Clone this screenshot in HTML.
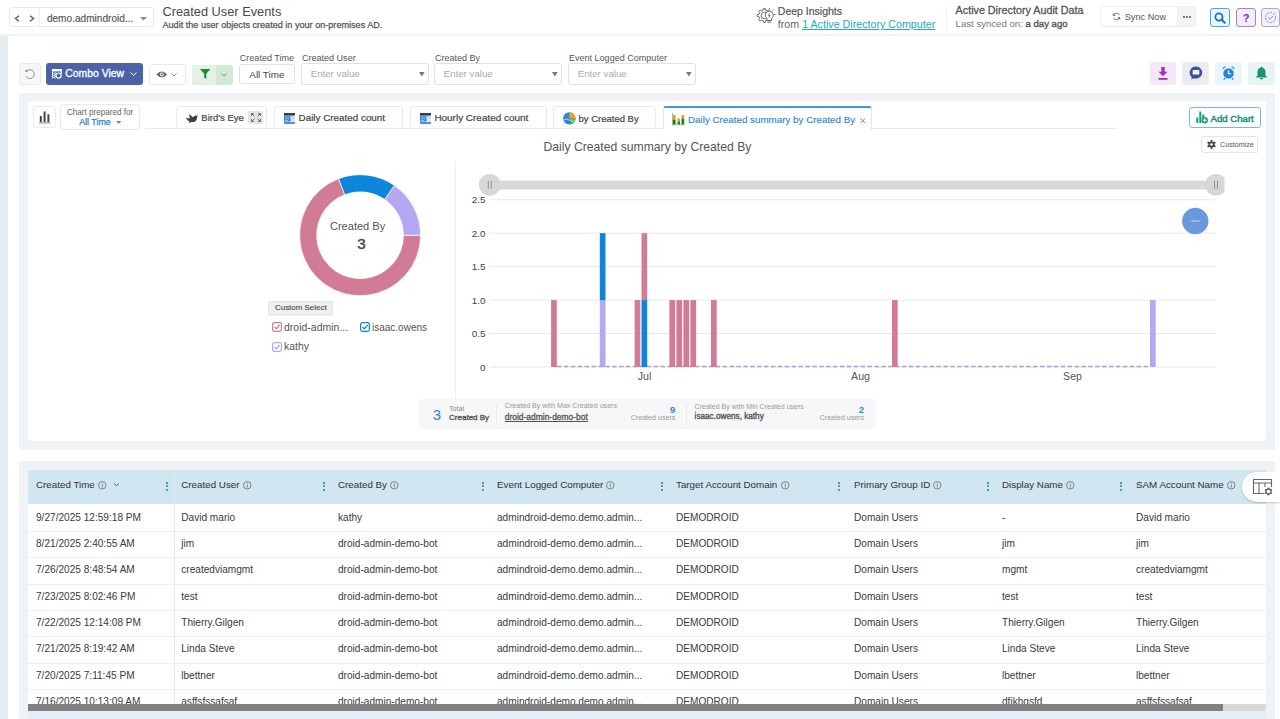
<!DOCTYPE html>
<html><head><meta charset="utf-8">
<style>
*{box-sizing:border-box;margin:0;padding:0}
html,body{width:1280px;height:719px;overflow:hidden;background:#fff;font-family:"Liberation Sans",sans-serif;color:#333}
.a{position:absolute}
.nw{white-space:nowrap;line-height:normal}
svg{overflow:visible}
</style></head><body>

<div class="a" style="left:0px;top:0px;width:1280px;height:35px;background:#fff"></div>
<div class="a" style="left:0px;top:34px;width:1280px;height:2px;background:#f1f3f5"></div>
<div class="a" style="left:0px;top:36px;width:8px;height:683px;background:#e5ebef"></div>
<div class="a" style="left:9px;top:7px;width:145px;height:20px;border:1px solid #e9ebed;border-radius:3px;background:#fff"></div>
<div class="a" style="left:39px;top:8px;width:1px;height:18px;background:#eef0f2"></div>
<svg class="a" style="left:14px;top:15px" width="6" height="7" viewBox="0 0 6 7"><path d="M5 0.7 L1.3 3.5 L5 6.3" fill="none" stroke="#555" stroke-width="1.2"/></svg>
<svg class="a" style="left:29px;top:15px" width="6" height="7" viewBox="0 0 6 7"><path d="M1 0.7 L4.7 3.5 L1 6.3" fill="none" stroke="#555" stroke-width="1.2"/></svg>
<div class="a nw" style="left:46.90px;top:12.99px;font-size:10.1px;color:#555;-webkit-text-stroke:0.15px #555;">demo.admindroid...</div>
<svg class="a" style="left:140px;top:16.5px" width="7" height="3.5" viewBox="0 0 7 3.5"><path d="M0 0 H7 L3.5 3.5Z" fill="#8a8a8a"/></svg>
<div class="a nw" style="left:162.50px;top:4.20px;font-size:12.8px;color:#484848;">Created User Events</div>
<div class="a nw" style="left:162.50px;top:19.91px;font-size:9.1px;color:#555;-webkit-text-stroke:0.25px #555;">Audit the user objects created in your on-premises AD.</div>
<svg class="a" style="left:757px;top:7px" width="19" height="17" viewBox="0 0 19 17"><g fill="none" stroke="#6a6a6a" stroke-width="1"><path d="M6.09 3.24 L6.33 1.57 L8.27 1.57 L8.51 3.24 L10.16 3.92 L11.51 2.91 L12.89 4.29 L11.88 5.64 L12.56 7.29 L14.23 7.53 L14.23 9.47 L12.56 9.71 L11.88 11.36 L12.89 12.71 L11.51 14.09 L10.16 13.08 L8.51 13.76 L8.27 15.43 L6.33 15.43 L6.09 13.76 L4.44 13.08 L3.09 14.09 L1.71 12.71 L2.72 11.36 L2.04 9.71 L0.37 9.47 L0.37 7.53 L2.04 7.29 L2.72 5.64 L1.71 4.29 L3.09 2.91 L4.44 3.92Z"/><circle cx="7.3" cy="8.5" r="3.2"/></g><path d="M12.3 4.2 a4 4 0 0 1 2.3 7.3 v2 h-4.6 v-2 A4 4 0 0 1 12.3 4.2Z" fill="#fff" stroke="#6a6a6a" stroke-width="1"/><path d="M12.8 6 L11.4 8.5 L13.1 8.5 L11.8 10.7" fill="none" stroke="#6a6a6a" stroke-width="0.9"/><path d="M10.4 15 h3.8" stroke="#6a6a6a" stroke-width="1"/><path d="M12.3 2.6 V1 M15.6 3.5 L16.6 2.5 M17 7.5 H18.6 M8.9 3.5 L8 2.5" stroke="#6a6a6a" stroke-width="0.9"/></svg>
<div class="a nw" style="left:777.80px;top:4.92px;font-size:10.5px;color:#555;-webkit-text-stroke:0.2px #555;">Deep Insights</div>
<div class="a nw" style="left:777.80px;top:18.14px;font-size:10.7px;color:#666;">from <span style="color:#25a9c6;text-decoration:underline;text-underline-offset:1px">1 Active Directory Computer</span></div>
<div class="a" style="left:946px;top:4px;width:1px;height:27px;background:#f0f1f3"></div>
<div class="a nw" style="left:955.60px;top:4.19px;font-size:10.75px;color:#555;-webkit-text-stroke:0.3px #555;">Active Directory Audit Data</div>
<div class="a nw" style="left:955.60px;top:18.45px;font-size:9.6px;color:#777;">Last synced on: <span style="color:#555;-webkit-text-stroke:0.35px #555">a day ago</span></div>
<div class="a" style="left:1100px;top:6px;width:96px;height:21px;border:1px solid #eceef0;border-radius:3px;background:#fff"></div>
<div class="a" style="left:1177px;top:7px;width:18px;height:19px;background:#f2f3f4;border-left:1px solid #eceef0"></div>
<svg class="a" style="left:1112px;top:12px" width="9" height="9" viewBox="0 0 9 9"><g fill="none" stroke="#777" stroke-width="1"><path d="M7.6 3.2 A3.3 3.3 0 0 0 1.4 3.5"/><path d="M1.4 5.8 A3.3 3.3 0 0 0 7.6 5.5"/></g><path d="M0.6 1.2 L1.1 4.2 L3.9 3.2Z M8.4 7.8 L7.9 4.8 L5.1 5.8Z" fill="#777"/></svg>
<div class="a nw" style="left:1124.70px;top:11.72px;font-size:9.2px;color:#555;">Sync Now</div>
<div class="a" style="left:1182.5px;top:15.5px;width:2px;height:2px;background:#555;border-radius:1px"></div>
<div class="a" style="left:1185.8px;top:15.5px;width:2px;height:2px;background:#555;border-radius:1px"></div>
<div class="a" style="left:1189.1px;top:15.5px;width:2px;height:2px;background:#555;border-radius:1px"></div>
<div class="a" style="left:1210px;top:8px;width:20px;height:19px;border:1px solid #4aa5dc;border-radius:3px;background:#eaf5fc"></div>
<svg class="a" style="left:1214px;top:12px" width="12" height="12" viewBox="0 0 12 12"><circle cx="5" cy="5" r="3.6" fill="none" stroke="#1d6fc3" stroke-width="1.7"/><path d="M7.7 7.7 L10.8 10.8" stroke="#1d6fc3" stroke-width="2" stroke-linecap="round"/></svg>
<div class="a" style="left:1236px;top:8px;width:20px;height:19px;border:1px solid #a87fdc;border-radius:3px;background:#f4edfb"></div>
<div class="a nw" style="left:946.00px;width:600px;text-align:center;top:11.86px;font-size:11px;color:#7b2cc0;font-weight:bold;">?</div>
<div class="a" style="left:1261px;top:8px;width:19px;height:19px;border:1px solid #aaa6dd;border-radius:3px;background:#f2f1fa"></div>
<svg class="a" style="left:1264px;top:11px" width="14" height="14" viewBox="0 0 14 14"><circle cx="6.5" cy="6.5" r="5" fill="none" stroke="#8e89d2" stroke-width="1" stroke-dasharray="2.2 1"/><path d="M4.2 6.6 L6 8.3 L9 5" fill="none" stroke="#8e89d2" stroke-width="1"/></svg>
<div class="a" style="left:19px;top:63px;width:22px;height:22px;border:1px solid #e9ebed;border-radius:3px;background:#f6f7f8"></div>
<svg class="a" style="left:24.5px;top:69px" width="11" height="11" viewBox="0 0 11 11"><path d="M1.6 2.2 A4.4 4.4 0 1 1 0.9 6.6" fill="none" stroke="#8a8a8a" stroke-width="0.9" transform="rotate(-10 5.5 5.5)"/><rect x="0.6" y="1" width="1.8" height="1.8" fill="#777"/></svg>
<div class="a" style="left:46px;top:63px;width:97px;height:22px;background:#4b62a9;border-radius:3px"></div>
<svg class="a" style="left:51.5px;top:68.8px" width="10" height="10" viewBox="0 0 10 10"><g fill="none" stroke="#fff" stroke-width="0.9"><path d="M0.5 9.5 V0.5 H9.5 V4"/><path d="M3 2.8 V9.5"/><circle cx="6.6" cy="6.6" r="2.6" stroke-width="1.2"/></g><rect x="0" y="0" width="10" height="2.4" fill="#fff"/><path d="M1 4.5 H2.5 M1 6.5 H2.5 M1 8.5 H2.5" stroke="#fff" stroke-width="0.7"/><path d="M8.2 3.6 L10 3.8 L9.1 5.4Z" fill="#fff"/></svg>
<div class="a nw" style="left:65.30px;top:67.92px;font-size:10.4px;color:#fff;-webkit-text-stroke:0.3px #fff;">Combo View</div>
<svg class="a" style="left:130px;top:72px" width="7" height="4" viewBox="0 0 7 4"><path d="M0.5 0.5 L3.5 3.3 L6.5 0.5" fill="none" stroke="#fff" stroke-width="1"/></svg>
<div class="a" style="left:149px;top:64px;width:37px;height:21px;border:1px solid #e9ebed;border-radius:3px;background:#fff"></div>
<svg class="a" style="left:156px;top:70.5px" width="11.5" height="7" viewBox="0 0 11.5 7"><path d="M0.3 3.5 Q5.75 -2.3 11.2 3.5 Q5.75 9.3 0.3 3.5Z" fill="#666"/><circle cx="5.75" cy="3.5" r="1.9" fill="#fff"/><circle cx="5.75" cy="3.5" r="1.1" fill="#666"/></svg>
<svg class="a" style="left:171px;top:73px" width="6" height="3.5" viewBox="0 0 6 3.5"><path d="M0.4 0.4 L3 3 L5.6 0.4" fill="none" stroke="#888" stroke-width="0.9"/></svg>
<div class="a" style="left:192px;top:65px;width:41px;height:20px;border-radius:3px;background:#d3e9d5"></div>
<div class="a" style="left:192px;top:65px;width:24px;height:20px;border-radius:3px 0 0 3px;background:#e6f0e6"></div>
<svg class="a" style="left:199.5px;top:69.4px" width="10.5" height="10" viewBox="0 0 10.5 10"><path d="M0 0 H10.5 L6.3 4.8 V10 L4.2 8.8 V4.8Z" fill="#1c8d2d"/></svg>
<svg class="a" style="left:221px;top:73px" width="6" height="3.5" viewBox="0 0 6 3.5"><path d="M0.4 0.4 L3 3 L5.6 0.4" fill="none" stroke="#6d8c70" stroke-width="0.9"/></svg>
<div class="a nw" style="left:239.80px;top:53.16px;font-size:9.05px;color:#555;">Created Time</div>
<div class="a" style="left:239px;top:64px;width:56px;height:20px;border:1px solid #dfe2e5;border-radius:3px;background:#fff"></div>
<div class="a nw" style="left:249.30px;top:69.08px;font-size:9.9px;color:#444;">All Time</div>
<div class="a nw" style="left:301.90px;top:52.96px;font-size:9.05px;color:#555;">Created User</div>
<div class="a" style="left:301px;top:63px;width:128px;height:22px;border:1px solid #dfe2e5;border-radius:3px;background:#fff"></div>
<div class="a nw" style="left:310.70px;top:67.96px;font-size:9.7px;color:#aaa;">Enter value</div>
<svg class="a" style="left:418.6px;top:71.8px" width="5.6" height="4.5" viewBox="0 0 5.6 4.5"><path d="M0 0 H5.6 L2.8 4.5Z" fill="#777"/></svg>
<div class="a nw" style="left:434.90px;top:52.96px;font-size:9.05px;color:#555;">Created By</div>
<div class="a" style="left:434px;top:63px;width:128px;height:22px;border:1px solid #dfe2e5;border-radius:3px;background:#fff"></div>
<div class="a nw" style="left:443.70px;top:67.96px;font-size:9.7px;color:#aaa;">Enter value</div>
<svg class="a" style="left:551.6px;top:71.8px" width="5.6" height="4.5" viewBox="0 0 5.6 4.5"><path d="M0 0 H5.6 L2.8 4.5Z" fill="#777"/></svg>
<div class="a nw" style="left:568.90px;top:52.96px;font-size:9.05px;color:#555;">Event Logged Computer</div>
<div class="a" style="left:568px;top:63px;width:128px;height:22px;border:1px solid #dfe2e5;border-radius:3px;background:#fff"></div>
<div class="a nw" style="left:577.70px;top:67.96px;font-size:9.7px;color:#aaa;">Enter value</div>
<svg class="a" style="left:685.6px;top:71.8px" width="5.6" height="4.5" viewBox="0 0 5.6 4.5"><path d="M0 0 H5.6 L2.8 4.5Z" fill="#777"/></svg>
<div class="a" style="left:1150px;top:62px;width:26px;height:23px;border-radius:3px;background:#f4e7f8"></div>
<svg class="a" style="left:1158px;top:66.5px" width="10" height="13.5" viewBox="0 0 10 13.5"><path d="M3.3 0 H6.7 V4.8 H9.5 L5 9.2 L0.5 4.8 H3.3Z" fill="#9d30c9"/><rect x="0.5" y="11" width="9" height="1.8" fill="#9d30c9"/></svg>
<div class="a" style="left:1182px;top:62px;width:27px;height:23px;border-radius:3px;background:#eaecf2"></div>
<svg class="a" style="left:1189px;top:66px" width="14" height="14" viewBox="0 0 14 14"><path d="M7 0.6 A6.3 6 0 1 1 4.7 12.2 L2.3 13.6 L2.7 11 A6.3 6 0 0 1 7 0.6Z" fill="#3b4f9c"/><rect x="3.7" y="4" width="6.6" height="4.6" rx="0.6" fill="#fff"/><path d="M3.9 4.3 L7 6.7 L10.1 4.3" fill="none" stroke="#b9c1e2" stroke-width="0.7"/></svg>
<div class="a" style="left:1215px;top:62px;width:27px;height:23px;border-radius:3px;background:#e9f4fb"></div>
<svg class="a" style="left:1222px;top:66px" width="13" height="14" viewBox="0 0 13 14"><circle cx="6.5" cy="7.4" r="5.2" fill="#2088e1"/><path d="M0.6 3.6 A2.5 2.5 0 0 1 4 0.8Z M12.4 3.6 A2.5 2.5 0 0 0 9 0.8Z" fill="#2088e1"/><path d="M6.5 4.3 V7.8 H9" fill="none" stroke="#fff" stroke-width="1.1"/><path d="M3 12 L1.8 13.6 M10 12 L11.2 13.6" stroke="#2088e1" stroke-width="1.3"/></svg>
<div class="a" style="left:1248px;top:62px;width:27px;height:23px;border-radius:3px;background:#e8f4f4"></div>
<svg class="a" style="left:1255px;top:66px" width="13" height="14" viewBox="0 0 13 14"><path d="M6.5 0.3 L7.3 1.4 C9.6 1.9 10.5 4 10.5 6.5 V9.5 L12.4 11.4 H0.6 L2.5 9.5 V6.5 C2.5 4 3.4 1.9 5.7 1.4Z" fill="#1d9073"/><path d="M5 12 H8 A1.5 1.6 0 0 1 5 12Z" fill="#1d9073"/></svg>
<div class="a" style="left:19px;top:93px;width:1256px;height:357px;background:#eff3f6"></div>
<div class="a" style="left:28px;top:101px;width:1238px;height:340px;background:#fff;border-radius:4px"></div>
<div class="a" style="left:33px;top:106px;width:23px;height:22px;border:1px solid #e7e9eb;border-radius:3px;background:#fff"></div>
<svg class="a" style="left:38.8px;top:111px" width="11.5" height="12.5" viewBox="0 0 11.5 12.5"><g fill="#444"><rect x="0.8" y="5" width="2" height="6.3"/><rect x="4.6" y="0.5" width="2" height="10.8"/><rect x="8.4" y="3.3" width="2" height="8"/></g><rect x="0" y="11.5" width="11.5" height="1" fill="#8f8f8f"/></svg>
<div class="a" style="left:60px;top:104px;width:80px;height:26px;border:1px solid #e7e9eb;border-radius:3px;background:#fff"></div>
<div class="a nw" style="left:66.90px;top:108.09px;font-size:8.15px;color:#666;">Chart prepared for</div>
<div class="a nw" style="left:79.20px;top:117.00px;font-size:8.9px;color:#2f80d2;-webkit-text-stroke:0.25px #2f80d2;">All Time</div>
<svg class="a" style="left:115.5px;top:121.3px" width="5.5" height="3" viewBox="0 0 5.5 3"><path d="M0 0 H5.5 L2.75 3Z" fill="#888"/></svg>
<div class="a" style="left:145px;top:128px;width:972px;height:1px;background:#e8eaec"></div>
<div class="a" style="left:176px;top:106px;width:91px;height:23px;border:1px solid #e7e9eb;border-radius:3px;background:#fff"></div>
<svg class="a" style="left:185.5px;top:113.6px" width="12" height="9.5" viewBox="0 0 12 9.5"><path d="M0 4 L3.8 4.6 L3 0 L6.8 3.2 L9.2 1.6 L10.6 1.8 L12 1.2 L11.2 2.8 L10.8 5.2 C10 7.6 7.6 8.4 5.2 8 L3.2 9.5 L3.4 7.2 C1.8 6.6 0.7 5.5 0 4Z" fill="#3e3e3e"/></svg>
<div class="a nw" style="left:201.30px;top:112.45px;font-size:9.5px;color:#444;-webkit-text-stroke:0.2px #444;">Bird's Eye</div>
<div class="a" style="left:248px;top:111px;width:15px;height:13px;background:#e3e5e7;border-radius:2px"></div>
<svg class="a" style="left:250.5px;top:113px" width="10" height="9" viewBox="0 0 10 9"><g stroke="#6f6f6f" stroke-width="1" fill="none"><path d="M0.5 3 V0.5 H3 M7 0.5 H9.5 V3 M9.5 6 V8.5 H7 M3 8.5 H0.5 V6"/><path d="M1 1 L3.5 3.3 M9 1 L6.5 3.3 M9 8 L6.5 5.7 M1 8 L3.5 5.7"/></g></svg>
<div class="a" style="left:274px;top:106px;width:129px;height:23px;border:1px solid #e7e9eb;border-radius:3px;background:#fff"></div>
<svg class="a" style="left:284px;top:112.7px" width="11" height="11" viewBox="0 0 11 11"><rect x="0" y="0" width="11" height="11" fill="#3b3b3b"/><rect x="0" y="2.5" width="11" height="8.5" fill="#dde9f5"/><rect x="0" y="2.5" width="6.5" height="6" fill="#2f7fd6"/><path d="M1 4 H5.5 M1 5.8 H5.5 M1 7.5 H4" stroke="#cfe4fa" stroke-width="0.6"/><path d="M6.5 3.5 H10.5 M6.5 5.5 H10.5" stroke="#9fc3ea" stroke-width="0.6"/><rect x="0" y="9" width="11" height="2" fill="#4a90e2"/></svg>
<div class="a nw" style="left:298.60px;top:112.32px;font-size:9.85px;color:#444;-webkit-text-stroke:0.2px #444;">Daily Created count</div>
<div class="a" style="left:410px;top:106px;width:137px;height:23px;border:1px solid #e7e9eb;border-radius:3px;background:#fff"></div>
<svg class="a" style="left:420px;top:112.7px" width="11" height="11" viewBox="0 0 11 11"><rect x="0" y="0" width="11" height="11" fill="#3b3b3b"/><rect x="0" y="2.5" width="11" height="8.5" fill="#dde9f5"/><rect x="0" y="2.5" width="6.5" height="6" fill="#2f7fd6"/><path d="M1 4 H5.5 M1 5.8 H5.5 M1 7.5 H4" stroke="#cfe4fa" stroke-width="0.6"/><path d="M6.5 3.5 H10.5 M6.5 5.5 H10.5" stroke="#9fc3ea" stroke-width="0.6"/><rect x="0" y="9" width="11" height="2" fill="#4a90e2"/></svg>
<div class="a nw" style="left:434.40px;top:112.23px;font-size:9.95px;color:#444;-webkit-text-stroke:0.2px #444;">Hourly Created count</div>
<div class="a" style="left:553px;top:106px;width:103px;height:23px;border:1px solid #e7e9eb;border-radius:3px;background:#fff"></div>
<svg class="a" style="left:562.6px;top:112px" width="12.7" height="12.7" viewBox="0 0 12.7 12.7"><circle cx="6.35" cy="6.35" r="6.2" fill="#2f87d8"/><path d="M6.35 6.35 V0.15 A6.2 6.2 0 0 1 12.55 6.35Z" fill="#f3a21d"/><path d="M6.35 6.35 H12.55 A6.2 6.2 0 0 1 9.4 11.7Z" fill="#68bf47"/><path d="M1 8 Q3 6 6 8 T11 9" fill="none" stroke="#fff" stroke-width="0.6"/></svg>
<div class="a nw" style="left:578.50px;top:112.75px;font-size:9.5px;color:#444;-webkit-text-stroke:0.2px #444;">by Created By</div>
<div class="a" style="left:663px;top:106px;width:209px;height:24px;border:1px solid #e5e7e9;border-top:2px solid #3f97dd;border-bottom:none;border-radius:3px 3px 0 0;background:#fff"></div>
<svg class="a" style="left:672px;top:112.5px" width="13" height="12.2" viewBox="0 0 13 12.2"><rect x="0" y="0" width="0.7" height="12.2" fill="#999"/><rect x="0" y="11.5" width="13" height="0.7" fill="#999"/><rect x="0.9" y="2" width="2.7" height="5" fill="#f59a12"/><rect x="0.9" y="7" width="2.7" height="4.5" fill="#118a1c"/><rect x="5.5" y="5.5" width="2.5" height="3" fill="#f59a12"/><rect x="5.5" y="8.5" width="2.5" height="3" fill="#118a1c"/><rect x="9.5" y="2" width="2.7" height="3.5" fill="#f59a12"/><rect x="9.5" y="5.5" width="2.7" height="6" fill="#118a1c"/></svg>
<div class="a nw" style="left:688.00px;top:114.37px;font-size:9.8px;color:#2e89d2;-webkit-text-stroke:0.15px #2e89d2;">Daily Created summary by Created By</div>
<svg class="a" style="left:860px;top:117.8px" width="5.5" height="5.4" viewBox="0 0 5.5 5.4"><path d="M0.3 0.3 L5.2 5.1 M5.2 0.3 L0.3 5.1" stroke="#777" stroke-width="0.9"/></svg>
<div class="a" style="left:1189px;top:107px;width:72px;height:21px;border:1px solid #6cc6b0;border-radius:3px;background:#fff"></div>
<svg class="a" style="left:1196px;top:110.5px" width="12" height="13" viewBox="0 0 12 13"><g fill="#1b9b7d"><rect x="0.3" y="6.5" width="2" height="5.5"/><rect x="3.3" y="0.5" width="2" height="11.5"/><rect x="6.3" y="3.5" width="2" height="4"/></g><circle cx="8.7" cy="9.2" r="3.2" fill="#1b9b7d"/><path d="M8.7 7.3 V11.1 M6.8 9.2 H10.6" stroke="#fff" stroke-width="1"/></svg>
<div class="a nw" style="left:1210.60px;top:112.95px;font-size:9.6px;color:#1a8f75;-webkit-text-stroke:0.45px #1a8f75;">Add Chart</div>
<div class="a" style="left:1201px;top:136px;width:57px;height:17px;border:1px solid #e4e6e8;border-radius:2px;background:#fff"></div>
<svg class="a" style="left:1207px;top:140px" width="9" height="9" viewBox="0 0 9 9"><g fill="#444"><circle cx="4.5" cy="4.5" r="3"/><rect x="3.6" y="0" width="1.8" height="2.2" transform="rotate(0 4.5 4.5)"/><rect x="3.6" y="0" width="1.8" height="2.2" transform="rotate(60 4.5 4.5)"/><rect x="3.6" y="0" width="1.8" height="2.2" transform="rotate(120 4.5 4.5)"/><rect x="3.6" y="0" width="1.8" height="2.2" transform="rotate(180 4.5 4.5)"/><rect x="3.6" y="0" width="1.8" height="2.2" transform="rotate(240 4.5 4.5)"/><rect x="3.6" y="0" width="1.8" height="2.2" transform="rotate(300 4.5 4.5)"/></g><circle cx="4.5" cy="4.5" r="1.3" fill="#fff"/></svg>
<div class="a nw" style="left:1220.00px;top:141.21px;font-size:7.15px;color:#555;">Customize</div>
<div class="a nw" style="left:347.40px;width:600px;text-align:center;top:139.76px;font-size:12.2px;color:#555;">Daily Created summary by Created By</div>
<svg class="a" style="left:0;top:0" width="1280" height="719"><path d="M420.60 235.20 A60.5 60.5 0 1 1 338.62 178.64 L344.69 194.63 A43.4 43.4 0 1 0 403.50 235.20Z" fill="#d27b95" stroke="#fff" stroke-width="0.7"/><path d="M338.62 178.64 A60.5 60.5 0 0 1 394.45 185.40 L384.74 199.48 A43.4 43.4 0 0 0 344.69 194.63Z" fill="#0b86dc" stroke="#fff" stroke-width="0.7"/><path d="M394.45 185.40 A60.5 60.5 0 0 1 420.60 235.20 L403.50 235.20 A43.4 43.4 0 0 0 384.74 199.48Z" fill="#b6a7f2" stroke="#fff" stroke-width="0.7"/></svg>
<div class="a nw" style="left:57.60px;width:600px;text-align:center;top:220.02px;font-size:11.05px;color:#555;">Created By</div>
<div class="a nw" style="left:61.50px;width:600px;text-align:center;top:234.59px;font-size:15.2px;color:#444;-webkit-text-stroke:0.4px #444;">3</div>
<div class="a" style="left:268px;top:301px;width:65px;height:14px;background:#eeeff0;border:1px solid #e3e4e5;border-radius:2px;box-shadow:0 1px 1px rgba(0,0,0,0.06)"></div>
<div class="a nw" style="left:275.00px;top:303.47px;font-size:7.95px;color:#444;-webkit-text-stroke:0.1px #444;">Custom Select</div>
<svg class="a" style="left:272px;top:322px" width="10" height="10" viewBox="0 0 10 10"><rect x="0.6" y="0.6" width="8.8" height="8.8" rx="1.8" fill="#fff" stroke="#d27b95" stroke-width="1.2"/><path d="M2.5 5 L4.3 6.9 L7.6 3" fill="none" stroke="#d27b95" stroke-width="1.3"/></svg>
<div class="a nw" style="left:284.00px;top:321.32px;font-size:10.5px;color:#555;">droid-admin...</div>
<svg class="a" style="left:360px;top:322px" width="10" height="10" viewBox="0 0 10 10"><rect x="0.6" y="0.6" width="8.8" height="8.8" rx="1.8" fill="#fff" stroke="#0b86dc" stroke-width="1.2"/><path d="M2.5 5 L4.3 6.9 L7.6 3" fill="none" stroke="#0b86dc" stroke-width="1.3"/></svg>
<div class="a nw" style="left:372.00px;top:321.79px;font-size:10px;color:#555;">isaac.owens</div>
<svg class="a" style="left:272px;top:342px" width="10" height="10" viewBox="0 0 10 10"><rect x="0.6" y="0.6" width="8.8" height="8.8" rx="1.8" fill="#fff" stroke="#b6a7f2" stroke-width="1.2"/><path d="M2.5 5 L4.3 6.9 L7.6 3" fill="none" stroke="#b6a7f2" stroke-width="1.3"/></svg>
<div class="a nw" style="left:284.00px;top:340.57px;font-size:10.45px;color:#555;">kathy</div>
<div class="a" style="left:455px;top:161px;width:1px;height:238px;background:#eef1f4"></div>
<svg class="a" style="left:0;top:0" width="1280" height="719" font-family="Liberation Sans"><line x1="490" y1="367.00" x2="1216" y2="367.00" stroke="#e8e8e8" stroke-width="1"/><line x1="490" y1="333.55" x2="1216" y2="333.55" stroke="#e8e8e8" stroke-width="1"/><line x1="490" y1="300.10" x2="1216" y2="300.10" stroke="#e8e8e8" stroke-width="1"/><line x1="490" y1="266.65" x2="1216" y2="266.65" stroke="#e8e8e8" stroke-width="1"/><line x1="490" y1="233.20" x2="1216" y2="233.20" stroke="#e8e8e8" stroke-width="1"/><line x1="490" y1="199.75" x2="1216" y2="199.75" stroke="#e8e8e8" stroke-width="1"/><text x="485.6" y="370.60" text-anchor="end" font-size="9.9" fill="#444">0</text><text x="485.6" y="337.15" text-anchor="end" font-size="9.9" fill="#444">0.5</text><text x="485.6" y="303.70" text-anchor="end" font-size="9.9" fill="#444">1.0</text><text x="485.6" y="270.25" text-anchor="end" font-size="9.9" fill="#444">1.5</text><text x="485.6" y="236.80" text-anchor="end" font-size="9.9" fill="#444">2.0</text><text x="485.6" y="203.35" text-anchor="end" font-size="9.9" fill="#444">2.5</text><text x="644.5" y="380.4" text-anchor="middle" font-size="10.6" fill="#555">Jul</text><text x="860.5" y="380.4" text-anchor="middle" font-size="10.6" fill="#555">Aug</text><text x="1072.5" y="380.4" text-anchor="middle" font-size="10.6" fill="#555">Sep</text><line x1="557" y1="366.6" x2="1150" y2="366.6" stroke="#ab9fd8" stroke-width="1.5" stroke-dasharray="4.5 2.4"/><rect x="551.1" y="300.10" width="5.7" height="66.90" fill="#d27b95"/><rect x="599.8" y="300.10" width="5.7" height="66.90" fill="#b6a7f2"/><rect x="599.8" y="233.20" width="5.7" height="66.90" fill="#0b86dc"/><rect x="634.6" y="300.10" width="5.7" height="66.90" fill="#d27b95"/><rect x="641.5" y="300.10" width="5.7" height="66.90" fill="#0b86dc"/><rect x="641.5" y="233.20" width="5.7" height="66.90" fill="#d27b95"/><rect x="669.4" y="300.10" width="5.7" height="66.90" fill="#d27b95"/><rect x="676.4" y="300.10" width="5.7" height="66.90" fill="#d27b95"/><rect x="683.4" y="300.10" width="5.7" height="66.90" fill="#d27b95"/><rect x="690.4" y="300.10" width="5.7" height="66.90" fill="#d27b95"/><rect x="711" y="300.10" width="5.7" height="66.90" fill="#d27b95"/><rect x="892" y="300.10" width="5.7" height="66.90" fill="#d27b95"/><rect x="1150" y="300.10" width="5.7" height="66.90" fill="#b6a7f2"/><rect x="490" y="180.6" width="726" height="8.9" fill="#d9d9d9"/><clipPath id="cl"><rect x="460" y="170" width="764.5" height="30"/></clipPath><circle cx="489.8" cy="184.8" r="10.9" fill="#d7d7d7" clip-path="url(#cl)"/><path d="M488.3 180.8 V188.8 M491.3 180.8 V188.8" stroke="#8a8a8a" stroke-width="0.9"/><circle cx="1216" cy="184.8" r="10.9" fill="#d7d7d7" clip-path="url(#cl)"/><path d="M1214.5 180.8 V188.8 M1217.5 180.8 V188.8" stroke="#8a8a8a" stroke-width="0.9"/><circle cx="1195.3" cy="221" r="13.2" fill="#6a99dd"/><path d="M1191.2 221 H1199.5" stroke="#e3ebf8" stroke-width="0.8"/></svg>
<div class="a" style="left:419px;top:399px;width:457px;height:30px;background:#f6f7f8;border-radius:4px"></div>
<div class="a nw" style="left:137.00px;width:600px;text-align:center;top:405.98px;font-size:15px;color:#2f86d6;">3</div>
<div class="a nw" style="left:449.10px;top:405.00px;font-size:7.05px;color:#8a8a8a;">Total</div>
<div class="a nw" style="left:449.10px;top:412.83px;font-size:8.0px;color:#555;-webkit-text-stroke:0.35px #555;">Created By</div>
<div class="a" style="left:496px;top:404px;width:1px;height:21px;background:#e8eaec"></div>
<div class="a nw" style="left:504.80px;top:402.44px;font-size:7.12px;color:#999;">Created By with Max Created users</div>
<div class="a nw" style="left:504.80px;top:412.01px;font-size:8.45px;color:#555;text-decoration:underline;text-decoration-thickness:0.6px;-webkit-text-stroke:0.3px #555;">droid-admin-demo-bot</div>
<div class="a nw" style="left:75.30px;width:600px;text-align:right;top:404.25px;font-size:9.5px;color:#2f86d6;font-weight:bold;">9</div>
<div class="a nw" style="left:75.30px;width:600px;text-align:right;top:413.76px;font-size:7.1px;color:#999;">Created users</div>
<div class="a" style="left:686px;top:404px;width:1px;height:21px;background:#e8eaec"></div>
<div class="a nw" style="left:694.60px;top:402.50px;font-size:7.05px;color:#999;">Created By with Min Created users</div>
<div class="a nw" style="left:694.60px;top:412.24px;font-size:8.2px;color:#555;-webkit-text-stroke:0.35px #555;">isaac.owens, kathy</div>
<div class="a nw" style="left:264.00px;width:600px;text-align:right;top:404.25px;font-size:9.5px;color:#2f86d6;font-weight:bold;">2</div>
<div class="a nw" style="left:264.00px;width:600px;text-align:right;top:413.80px;font-size:7.05px;color:#999;">Created users</div>
<div class="a" style="left:19px;top:461px;width:1256px;height:258px;background:#eff3f6"></div>
<div class="a" style="left:28px;top:470px;width:1238px;height:249px;background:#fff"></div>
<div class="a" style="left:28px;top:470px;width:1238px;height:34px;background:#d0e7f1"></div>
<div class="a nw" style="left:36.00px;top:479.17px;font-size:9.8px;color:#383838;-webkit-text-stroke:0.05px #383838;">Created Time</div>
<div class="a nw" style="left:181.25px;top:479.17px;font-size:9.8px;color:#383838;-webkit-text-stroke:0.05px #383838;">Created User</div>
<div class="a nw" style="left:338.00px;top:479.17px;font-size:9.8px;color:#383838;-webkit-text-stroke:0.05px #383838;">Created By</div>
<div class="a nw" style="left:497.00px;top:479.17px;font-size:9.8px;color:#383838;-webkit-text-stroke:0.05px #383838;">Event Logged Computer</div>
<div class="a nw" style="left:676.00px;top:479.17px;font-size:9.8px;color:#383838;-webkit-text-stroke:0.05px #383838;">Target Account Domain</div>
<div class="a nw" style="left:854.00px;top:479.17px;font-size:9.8px;color:#383838;-webkit-text-stroke:0.05px #383838;">Primary Group ID</div>
<div class="a nw" style="left:1002.00px;top:479.17px;font-size:9.8px;color:#383838;-webkit-text-stroke:0.05px #383838;">Display Name</div>
<div class="a nw" style="left:1136.00px;top:479.17px;font-size:9.8px;color:#383838;-webkit-text-stroke:0.05px #383838;">SAM Account Name</div>
<svg class="a" style="left:97.98px;top:480.5px" width="8.5" height="8.5" viewBox="0 0 8.5 8.5"><circle cx="4.25" cy="4.25" r="3.75" fill="none" stroke="#777" stroke-width="0.9"/><rect x="3.8" y="3.6" width="0.9" height="2.8" fill="#777"/><rect x="3.8" y="2.1" width="0.9" height="0.9" fill="#777"/></svg>
<svg class="a" style="left:242.51px;top:480.5px" width="8.5" height="8.5" viewBox="0 0 8.5 8.5"><circle cx="4.25" cy="4.25" r="3.75" fill="none" stroke="#777" stroke-width="0.9"/><rect x="3.8" y="3.6" width="0.9" height="2.8" fill="#777"/><rect x="3.8" y="2.1" width="0.9" height="0.9" fill="#777"/></svg>
<svg class="a" style="left:390.01px;top:480.5px" width="8.5" height="8.5" viewBox="0 0 8.5 8.5"><circle cx="4.25" cy="4.25" r="3.75" fill="none" stroke="#777" stroke-width="0.9"/><rect x="3.8" y="3.6" width="0.9" height="2.8" fill="#777"/><rect x="3.8" y="2.1" width="0.9" height="0.9" fill="#777"/></svg>
<svg class="a" style="left:606.2px;top:480.5px" width="8.5" height="8.5" viewBox="0 0 8.5 8.5"><circle cx="4.25" cy="4.25" r="3.75" fill="none" stroke="#777" stroke-width="0.9"/><rect x="3.8" y="3.6" width="0.9" height="2.8" fill="#777"/><rect x="3.8" y="2.1" width="0.9" height="0.9" fill="#777"/></svg>
<svg class="a" style="left:780.83px;top:480.5px" width="8.5" height="8.5" viewBox="0 0 8.5 8.5"><circle cx="4.25" cy="4.25" r="3.75" fill="none" stroke="#777" stroke-width="0.9"/><rect x="3.8" y="3.6" width="0.9" height="2.8" fill="#777"/><rect x="3.8" y="2.1" width="0.9" height="0.9" fill="#777"/></svg>
<svg class="a" style="left:933.21px;top:480.5px" width="8.5" height="8.5" viewBox="0 0 8.5 8.5"><circle cx="4.25" cy="4.25" r="3.75" fill="none" stroke="#777" stroke-width="0.9"/><rect x="3.8" y="3.6" width="0.9" height="2.8" fill="#777"/><rect x="3.8" y="2.1" width="0.9" height="0.9" fill="#777"/></svg>
<svg class="a" style="left:1065.98px;top:480.5px" width="8.5" height="8.5" viewBox="0 0 8.5 8.5"><circle cx="4.25" cy="4.25" r="3.75" fill="none" stroke="#777" stroke-width="0.9"/><rect x="3.8" y="3.6" width="0.9" height="2.8" fill="#777"/><rect x="3.8" y="2.1" width="0.9" height="0.9" fill="#777"/></svg>
<svg class="a" style="left:1227.21px;top:480.5px" width="8.5" height="8.5" viewBox="0 0 8.5 8.5"><circle cx="4.25" cy="4.25" r="3.75" fill="none" stroke="#777" stroke-width="0.9"/><rect x="3.8" y="3.6" width="0.9" height="2.8" fill="#777"/><rect x="3.8" y="2.1" width="0.9" height="0.9" fill="#777"/></svg>
<svg class="a" style="left:114.25px;top:483px" width="5" height="4" viewBox="0 0 5 4"><path d="M0.4 0.4 L2.5 3 L4.6 0.4" fill="none" stroke="#178b7e" stroke-width="1"/></svg>
<div class="a" style="left:166px;top:481.5px;width:2.4px;height:2.4px;background:#17897c;border-radius:50%"></div>
<div class="a" style="left:166px;top:485.1px;width:2.4px;height:2.4px;background:#17897c;border-radius:50%"></div>
<div class="a" style="left:166px;top:488.7px;width:2.4px;height:2.4px;background:#17897c;border-radius:50%"></div>
<div class="a" style="left:322.9px;top:481.5px;width:2.4px;height:2.4px;background:#17897c;border-radius:50%"></div>
<div class="a" style="left:322.9px;top:485.1px;width:2.4px;height:2.4px;background:#17897c;border-radius:50%"></div>
<div class="a" style="left:322.9px;top:488.7px;width:2.4px;height:2.4px;background:#17897c;border-radius:50%"></div>
<div class="a" style="left:482px;top:481.5px;width:2.4px;height:2.4px;background:#17897c;border-radius:50%"></div>
<div class="a" style="left:482px;top:485.1px;width:2.4px;height:2.4px;background:#17897c;border-radius:50%"></div>
<div class="a" style="left:482px;top:488.7px;width:2.4px;height:2.4px;background:#17897c;border-radius:50%"></div>
<div class="a" style="left:661px;top:481.5px;width:2.4px;height:2.4px;background:#17897c;border-radius:50%"></div>
<div class="a" style="left:661px;top:485.1px;width:2.4px;height:2.4px;background:#17897c;border-radius:50%"></div>
<div class="a" style="left:661px;top:488.7px;width:2.4px;height:2.4px;background:#17897c;border-radius:50%"></div>
<div class="a" style="left:838px;top:481.5px;width:2.4px;height:2.4px;background:#17897c;border-radius:50%"></div>
<div class="a" style="left:838px;top:485.1px;width:2.4px;height:2.4px;background:#17897c;border-radius:50%"></div>
<div class="a" style="left:838px;top:488.7px;width:2.4px;height:2.4px;background:#17897c;border-radius:50%"></div>
<div class="a" style="left:987px;top:481.5px;width:2.4px;height:2.4px;background:#17897c;border-radius:50%"></div>
<div class="a" style="left:987px;top:485.1px;width:2.4px;height:2.4px;background:#17897c;border-radius:50%"></div>
<div class="a" style="left:987px;top:488.7px;width:2.4px;height:2.4px;background:#17897c;border-radius:50%"></div>
<div class="a" style="left:1120px;top:481.5px;width:2.4px;height:2.4px;background:#17897c;border-radius:50%"></div>
<div class="a" style="left:1120px;top:485.1px;width:2.4px;height:2.4px;background:#17897c;border-radius:50%"></div>
<div class="a" style="left:1120px;top:488.7px;width:2.4px;height:2.4px;background:#17897c;border-radius:50%"></div>
<div class="a" style="left:174px;top:470px;width:1px;height:249px;background:#e6eaed"></div>
<div class="a" style="left:28px;top:531.0px;width:1238px;height:1px;background:#eef0f1"></div>
<div class="a nw" style="left:36.00px;top:511.89px;font-size:10.1px;color:#3a3a3a;">9/27/2025 12:59:18 PM</div>
<div class="a nw" style="left:181.25px;top:511.89px;font-size:10.1px;color:#3a3a3a;">David mario</div>
<div class="a nw" style="left:338.00px;top:511.89px;font-size:10.1px;color:#3a3a3a;">kathy</div>
<div class="a nw" style="left:497.00px;top:511.89px;font-size:10.1px;color:#3a3a3a;">admindroid-demo.demo.admin...</div>
<div class="a nw" style="left:676.00px;top:511.89px;font-size:10.1px;color:#3a3a3a;">DEMODROID</div>
<div class="a nw" style="left:854.00px;top:511.89px;font-size:10.1px;color:#3a3a3a;">Domain Users</div>
<div class="a nw" style="left:1002.00px;top:511.89px;font-size:10.1px;color:#3a3a3a;">-</div>
<div class="a nw" style="left:1136.00px;top:511.89px;font-size:10.1px;color:#3a3a3a;">David mario</div>
<div class="a" style="left:28px;top:557.3px;width:1238px;height:1px;background:#eef0f1"></div>
<div class="a nw" style="left:36.00px;top:538.19px;font-size:10.1px;color:#3a3a3a;">8/21/2025 2:40:55 AM</div>
<div class="a nw" style="left:181.25px;top:538.19px;font-size:10.1px;color:#3a3a3a;">jim</div>
<div class="a nw" style="left:338.00px;top:538.19px;font-size:10.1px;color:#3a3a3a;">droid-admin-demo-bot</div>
<div class="a nw" style="left:497.00px;top:538.19px;font-size:10.1px;color:#3a3a3a;">admindroid-demo.demo.admin...</div>
<div class="a nw" style="left:676.00px;top:538.19px;font-size:10.1px;color:#3a3a3a;">DEMODROID</div>
<div class="a nw" style="left:854.00px;top:538.19px;font-size:10.1px;color:#3a3a3a;">Domain Users</div>
<div class="a nw" style="left:1002.00px;top:538.19px;font-size:10.1px;color:#3a3a3a;">jim</div>
<div class="a nw" style="left:1136.00px;top:538.19px;font-size:10.1px;color:#3a3a3a;">jim</div>
<div class="a" style="left:28px;top:583.6px;width:1238px;height:1px;background:#eef0f1"></div>
<div class="a nw" style="left:36.00px;top:564.49px;font-size:10.1px;color:#3a3a3a;">7/26/2025 8:48:54 AM</div>
<div class="a nw" style="left:181.25px;top:564.49px;font-size:10.1px;color:#3a3a3a;">createdviamgmt</div>
<div class="a nw" style="left:338.00px;top:564.49px;font-size:10.1px;color:#3a3a3a;">droid-admin-demo-bot</div>
<div class="a nw" style="left:497.00px;top:564.49px;font-size:10.1px;color:#3a3a3a;">admindroid-demo.demo.admin...</div>
<div class="a nw" style="left:676.00px;top:564.49px;font-size:10.1px;color:#3a3a3a;">DEMODROID</div>
<div class="a nw" style="left:854.00px;top:564.49px;font-size:10.1px;color:#3a3a3a;">Domain Users</div>
<div class="a nw" style="left:1002.00px;top:564.49px;font-size:10.1px;color:#3a3a3a;">mgmt</div>
<div class="a nw" style="left:1136.00px;top:564.49px;font-size:10.1px;color:#3a3a3a;">createdviamgmt</div>
<div class="a" style="left:28px;top:609.9px;width:1238px;height:1px;background:#eef0f1"></div>
<div class="a nw" style="left:36.00px;top:590.79px;font-size:10.1px;color:#3a3a3a;">7/23/2025 8:02:46 PM</div>
<div class="a nw" style="left:181.25px;top:590.79px;font-size:10.1px;color:#3a3a3a;">test</div>
<div class="a nw" style="left:338.00px;top:590.79px;font-size:10.1px;color:#3a3a3a;">droid-admin-demo-bot</div>
<div class="a nw" style="left:497.00px;top:590.79px;font-size:10.1px;color:#3a3a3a;">admindroid-demo.demo.admin...</div>
<div class="a nw" style="left:676.00px;top:590.79px;font-size:10.1px;color:#3a3a3a;">DEMODROID</div>
<div class="a nw" style="left:854.00px;top:590.79px;font-size:10.1px;color:#3a3a3a;">Domain Users</div>
<div class="a nw" style="left:1002.00px;top:590.79px;font-size:10.1px;color:#3a3a3a;">test</div>
<div class="a nw" style="left:1136.00px;top:590.79px;font-size:10.1px;color:#3a3a3a;">test</div>
<div class="a" style="left:28px;top:636.2px;width:1238px;height:1px;background:#eef0f1"></div>
<div class="a nw" style="left:36.00px;top:617.09px;font-size:10.1px;color:#3a3a3a;">7/22/2025 12:14:08 PM</div>
<div class="a nw" style="left:181.25px;top:617.09px;font-size:10.1px;color:#3a3a3a;">Thierry.Gilgen</div>
<div class="a nw" style="left:338.00px;top:617.09px;font-size:10.1px;color:#3a3a3a;">droid-admin-demo-bot</div>
<div class="a nw" style="left:497.00px;top:617.09px;font-size:10.1px;color:#3a3a3a;">admindroid-demo.demo.admin...</div>
<div class="a nw" style="left:676.00px;top:617.09px;font-size:10.1px;color:#3a3a3a;">DEMODROID</div>
<div class="a nw" style="left:854.00px;top:617.09px;font-size:10.1px;color:#3a3a3a;">Domain Users</div>
<div class="a nw" style="left:1002.00px;top:617.09px;font-size:10.1px;color:#3a3a3a;">Thierry.Gilgen</div>
<div class="a nw" style="left:1136.00px;top:617.09px;font-size:10.1px;color:#3a3a3a;">Thierry.Gilgen</div>
<div class="a" style="left:28px;top:662.5px;width:1238px;height:1px;background:#eef0f1"></div>
<div class="a nw" style="left:36.00px;top:643.39px;font-size:10.1px;color:#3a3a3a;">7/21/2025 8:19:42 AM</div>
<div class="a nw" style="left:181.25px;top:643.39px;font-size:10.1px;color:#3a3a3a;">Linda Steve</div>
<div class="a nw" style="left:338.00px;top:643.39px;font-size:10.1px;color:#3a3a3a;">droid-admin-demo-bot</div>
<div class="a nw" style="left:497.00px;top:643.39px;font-size:10.1px;color:#3a3a3a;">admindroid-demo.demo.admin...</div>
<div class="a nw" style="left:676.00px;top:643.39px;font-size:10.1px;color:#3a3a3a;">DEMODROID</div>
<div class="a nw" style="left:854.00px;top:643.39px;font-size:10.1px;color:#3a3a3a;">Domain Users</div>
<div class="a nw" style="left:1002.00px;top:643.39px;font-size:10.1px;color:#3a3a3a;">Linda Steve</div>
<div class="a nw" style="left:1136.00px;top:643.39px;font-size:10.1px;color:#3a3a3a;">Linda Steve</div>
<div class="a" style="left:28px;top:688.8px;width:1238px;height:1px;background:#eef0f1"></div>
<div class="a nw" style="left:36.00px;top:669.69px;font-size:10.1px;color:#3a3a3a;">7/20/2025 7:11:45 PM</div>
<div class="a nw" style="left:181.25px;top:669.69px;font-size:10.1px;color:#3a3a3a;">lbettner</div>
<div class="a nw" style="left:338.00px;top:669.69px;font-size:10.1px;color:#3a3a3a;">droid-admin-demo-bot</div>
<div class="a nw" style="left:497.00px;top:669.69px;font-size:10.1px;color:#3a3a3a;">admindroid-demo.demo.admin...</div>
<div class="a nw" style="left:676.00px;top:669.69px;font-size:10.1px;color:#3a3a3a;">DEMODROID</div>
<div class="a nw" style="left:854.00px;top:669.69px;font-size:10.1px;color:#3a3a3a;">Domain Users</div>
<div class="a nw" style="left:1002.00px;top:669.69px;font-size:10.1px;color:#3a3a3a;">lbettner</div>
<div class="a nw" style="left:1136.00px;top:669.69px;font-size:10.1px;color:#3a3a3a;">lbettner</div>
<div class="a" style="left:28px;top:715.1px;width:1238px;height:1px;background:#eef0f1"></div>
<div class="a nw" style="left:36.00px;top:695.99px;font-size:10.1px;color:#3a3a3a;">7/16/2025 10:13:09 AM</div>
<div class="a nw" style="left:181.25px;top:695.99px;font-size:10.1px;color:#3a3a3a;">asffsfssafsaf</div>
<div class="a nw" style="left:338.00px;top:695.99px;font-size:10.1px;color:#3a3a3a;">droid-admin-demo-bot</div>
<div class="a nw" style="left:497.00px;top:695.99px;font-size:10.1px;color:#3a3a3a;">admindroid-demo.demo.admin...</div>
<div class="a nw" style="left:676.00px;top:695.99px;font-size:10.1px;color:#3a3a3a;">DEMODROID</div>
<div class="a nw" style="left:854.00px;top:695.99px;font-size:10.1px;color:#3a3a3a;">Domain Users</div>
<div class="a nw" style="left:1002.00px;top:695.99px;font-size:10.1px;color:#3a3a3a;">dfjkhgsfd</div>
<div class="a nw" style="left:1136.00px;top:695.99px;font-size:10.1px;color:#3a3a3a;">asffsfssafsaf</div>
<div class="a" style="left:28px;top:704px;width:1238px;height:7px;background:#d9d9d9"></div>
<div class="a" style="left:28px;top:704px;width:1195px;height:7px;background:#808080"></div>
<div class="a" style="left:28px;top:711px;width:1238px;height:8px;background:#e4f0f7"></div>
<div class="a" style="left:1242px;top:472px;width:40px;height:30px;background:#fff;border-radius:15px 0 0 15px;box-shadow:0 1px 2px rgba(0,0,0,0.2)"></div>
<svg class="a" style="left:1253px;top:479px" width="20" height="16" viewBox="0 0 20 16"><g fill="none" stroke="#666" stroke-width="1.1"><path d="M11.5 14.5 H0.5 V0.5 H18.5 V8"/><path d="M0.5 4 H18.5 M6 4 V14.5 M12 4 V8"/></g><g fill="#666"><rect x="14.6" y="8.6" width="1.8" height="2" transform="rotate(0 15.5 12.5)"/><rect x="14.6" y="8.6" width="1.8" height="2" transform="rotate(60 15.5 12.5)"/><rect x="14.6" y="8.6" width="1.8" height="2" transform="rotate(120 15.5 12.5)"/><rect x="14.6" y="8.6" width="1.8" height="2" transform="rotate(180 15.5 12.5)"/><rect x="14.6" y="8.6" width="1.8" height="2" transform="rotate(240 15.5 12.5)"/><rect x="14.6" y="8.6" width="1.8" height="2" transform="rotate(300 15.5 12.5)"/></g><circle cx="15.5" cy="12.5" r="2.5" fill="#fff" stroke="#666" stroke-width="1.3"/></svg>
</body></html>
